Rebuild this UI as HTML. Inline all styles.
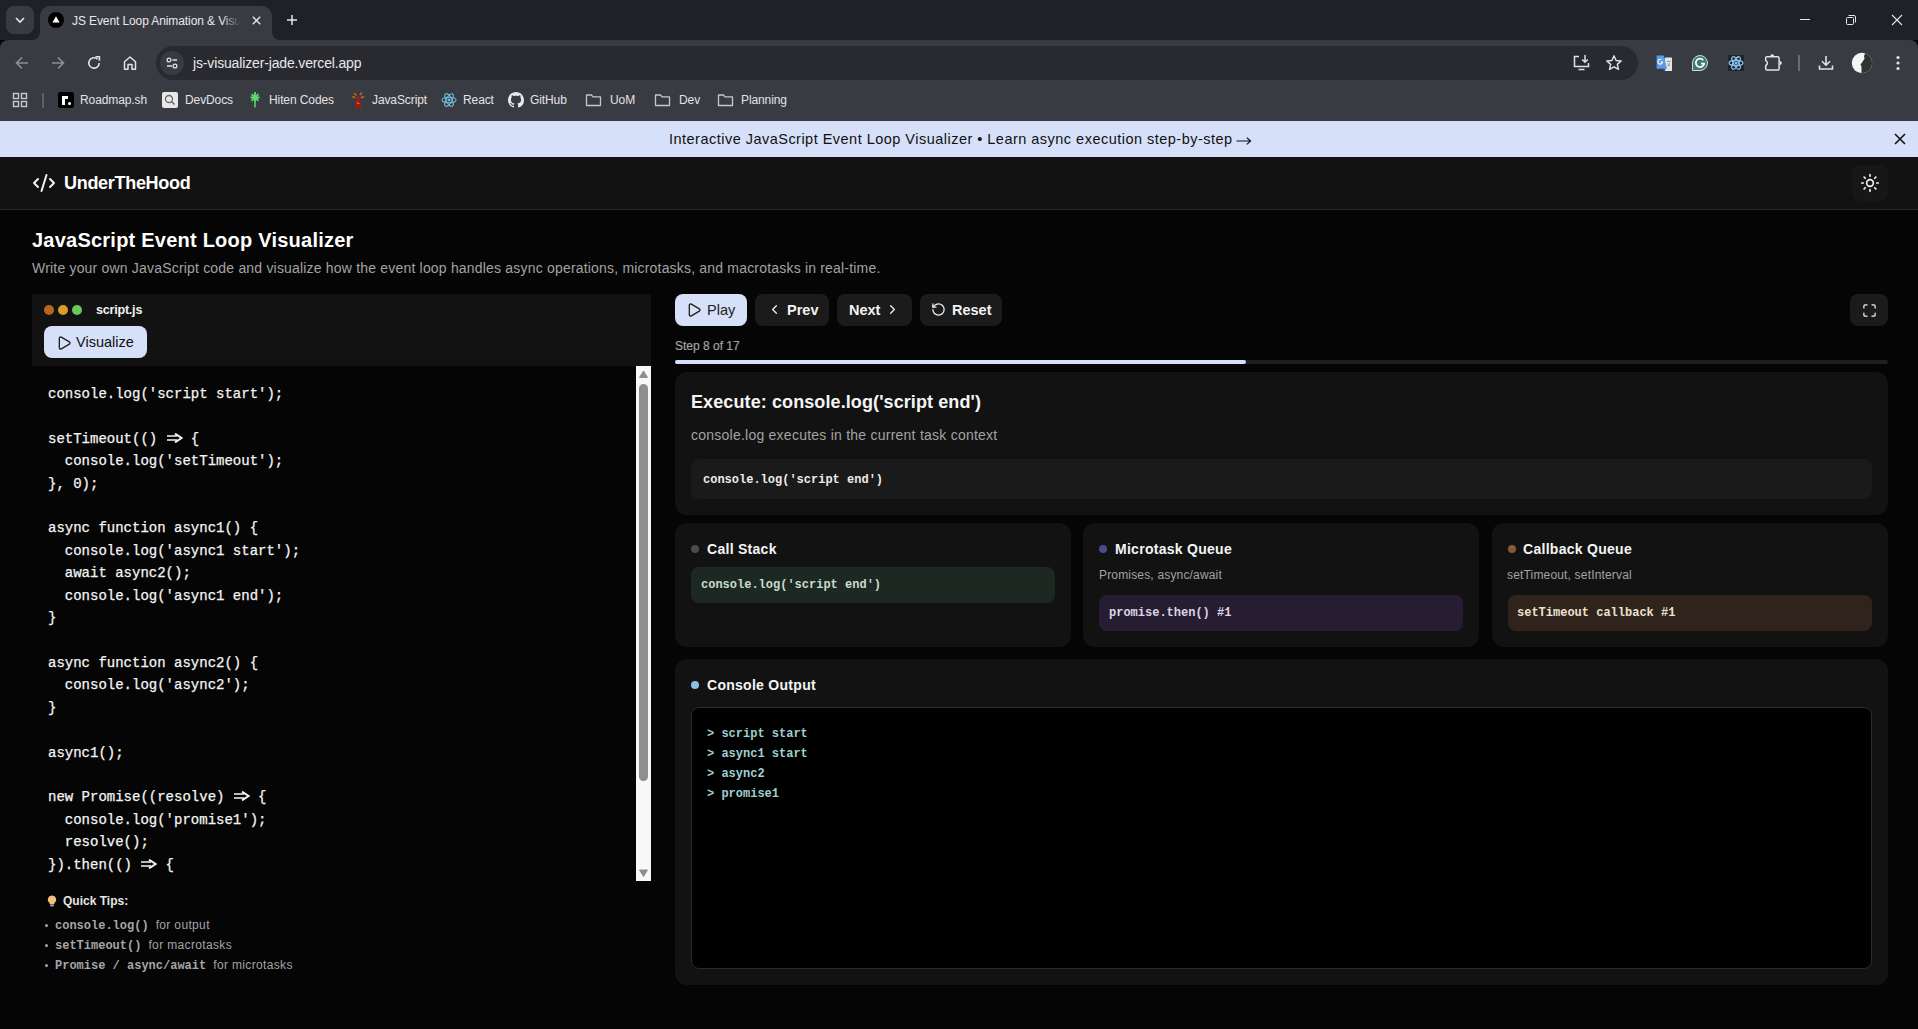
<!DOCTYPE html>
<html><head><meta charset="utf-8">
<style>
*{box-sizing:border-box;margin:0;padding:0}
html,body{width:1918px;height:1029px;overflow:hidden;background:#050505;font-family:"Liberation Sans",sans-serif;color:#fff}
.abs{position:absolute}
svg{display:block}
/* chrome */
#tabstrip{left:0;top:0;width:1918px;height:40px;background:#1f2129}
#toolbar{left:0;top:40px;width:1918px;height:81px;background:#393b43;border-radius:8px 8px 0 0}
#omni{left:156px;top:46px;width:1482px;height:34px;border-radius:17px;background:#282a30}
.bm{position:absolute;top:92px;height:16px;font-size:12px;letter-spacing:-0.1px;color:#e3e3e3;line-height:16px;white-space:nowrap}
/* app */
#banner{left:0;top:121px;width:1918px;height:36px;background:#d6e0f8;color:#111;font-size:14.5px;text-align:center;line-height:36px}
#hdr{left:0;top:157px;width:1918px;height:53px;background:#121212;border-bottom:1px solid #26272b}
.mono{font-family:"Liberation Mono",monospace}
.card{position:absolute;background:#121212;border-radius:12px}
.btn{position:absolute;top:294px;height:32px;border-radius:8px;background:#1b1b1b;font-size:15px;font-weight:bold;color:#f2f2f2;line-height:32px}
.code{left:48px;top:381px;font-size:14px;line-height:22.4px;color:#f5f5f5;white-space:pre;font-weight:normal;-webkit-text-stroke:0.25px #f5f5f5}
.arr{display:inline-block;width:16.8px;height:10px;vertical-align:0px}
.arr svg{display:block}
.tip{left:44px;font-size:12px;line-height:16px;color:#a3a3a3;white-space:pre}
.tip i{position:absolute;left:0.5px;top:6.5px;width:3px;height:3px;border-radius:50%;background:#a3a3a3}
.tip .mono{position:relative;left:11px;font-size:12px;font-weight:bold;color:#a6a6a6}
.tip b{position:relative;left:18px;font-weight:normal;letter-spacing:0.35px}
.btxt{top:301px;font-size:14.5px;font-weight:bold;line-height:18px;color:#f2f2f2}
.dot{position:absolute;width:8px;height:8px;border-radius:50%}
.ctitle{top:541px;font-size:14px;font-weight:bold;line-height:17px;color:#f5f5f5;letter-spacing:0.28px}
.csub{top:568px;font-size:12px;line-height:14px;color:#a3a3a3;letter-spacing:0.17px}
.item{font-size:12px;line-height:15px;font-weight:bold}
</style></head><body>

<!-- ============ TAB STRIP ============ -->
<div id="tabstrip" class="abs"></div>
<div class="abs" style="left:6px;top:6px;width:28px;height:28px;border-radius:8px;background:#393b43"></div>
<svg class="abs" style="left:14px;top:14px" width="12" height="12" viewBox="0 0 12 12"><path d="M2 4 L6 8 L10 4" stroke="#e6e6e6" stroke-width="1.6" fill="none"/></svg>
<!-- active tab -->
<div class="abs" style="left:40px;top:6px;width:232px;height:35px;background:#393b43;border-radius:10px 10px 0 0"></div>
<div class="abs" style="left:32px;top:32px;width:8px;height:8px;background:radial-gradient(circle at 0 0,#1f2129 7.5px,#393b43 8.5px)"></div>
<div class="abs" style="left:272px;top:32px;width:8px;height:8px;background:radial-gradient(circle at 100% 0,#1f2129 7.5px,#393b43 8.5px)"></div>
<div class="abs" style="left:48px;top:12px;width:16px;height:16px;border-radius:50%;background:#000"></div>
<svg class="abs" style="left:48px;top:12px" width="16" height="16" viewBox="0 0 16 16"><path d="M8 4.2 L11.6 10.6 L4.4 10.6Z" fill="#fff"/></svg>
<div class="abs" style="left:72px;top:12px;width:170px;height:18px;font-size:12px;letter-spacing:-0.1px;color:#e8e8e8;white-space:nowrap;overflow:hidden;line-height:18px">JS Event Loop Animation &amp; Visu</div>
<div class="abs" style="left:222px;top:10px;width:26px;height:20px;background:linear-gradient(90deg,rgba(57,59,67,0),#393b43 70%)"></div>
<svg class="abs" style="left:251.5px;top:15.5px" width="9" height="9" viewBox="0 0 9 9"><path d="M0.8 0.8L8.2 8.2M8.2 0.8L0.8 8.2" stroke="#e6e6e6" stroke-width="1.4"/></svg>
<svg class="abs" style="left:286px;top:14px" width="12" height="12" viewBox="0 0 12 12"><path d="M6 1V11M1 6H11" stroke="#e6e6e6" stroke-width="1.5"/></svg>
<!-- window controls -->
<svg class="abs" style="left:1799px;top:14px" width="12" height="12" viewBox="0 0 12 12"><path d="M1 5.5H11" stroke="#e6e6e6" stroke-width="1"/></svg>
<svg class="abs" style="left:1845px;top:14px" width="12" height="12" viewBox="0 0 12 12"><rect x="1.5" y="3.5" width="7" height="7" rx="1" stroke="#e6e6e6" stroke-width="1" fill="none"/><path d="M3.5 1.5H9A1.5 1.5 0 0 1 10.5 3V8.5" stroke="#e6e6e6" stroke-width="1" fill="none"/></svg>
<svg class="abs" style="left:1891px;top:14px" width="12" height="12" viewBox="0 0 12 12"><path d="M1 1L11 11M11 1L1 11" stroke="#e6e6e6" stroke-width="1.1"/></svg>

<!-- ============ TOOLBAR ============ -->
<div id="toolbar" class="abs"></div>
<svg class="abs" style="left:14px;top:55px" width="16" height="16" viewBox="0 0 16 16"><path d="M14 8H2.5M8 2.5L2.5 8L8 13.5" stroke="#8c8e94" stroke-width="1.6" fill="none"/></svg>
<svg class="abs" style="left:50px;top:55px" width="16" height="16" viewBox="0 0 16 16"><path d="M2 8H13.5M8 2.5L13.5 8L8 13.5" stroke="#8c8e94" stroke-width="1.6" fill="none"/></svg>
<svg class="abs" style="left:86px;top:55px" width="16" height="16" viewBox="0 0 16 16"><path d="M13.2 8A5.2 5.2 0 1 1 11.6 4.2" stroke="#e3e3e3" stroke-width="1.6" fill="none"/><path d="M9.5 1.8H13.4V5.7" stroke="#e3e3e3" stroke-width="1.6" fill="none"/></svg>
<svg class="abs" style="left:122px;top:55px" width="16" height="16" viewBox="0 0 16 16"><path d="M2.5 14.2V6.8L8 2L13.5 6.8V14.2H10V9.5H6V14.2Z" stroke="#e3e3e3" stroke-width="1.5" fill="none" stroke-linejoin="round"/></svg>
<div id="omni" class="abs"></div>
<div class="abs" style="left:160px;top:51px;width:24px;height:24px;border-radius:50%;background:#393b43"></div>
<svg class="abs" style="left:164px;top:55px" width="16" height="16" viewBox="0 0 16 16"><circle cx="5" cy="5" r="1.9" stroke="#e3e3e3" stroke-width="1.3" fill="none"/><path d="M8.5 5H13M3 11H8" stroke="#e3e3e3" stroke-width="1.3"/><circle cx="11" cy="11" r="1.9" stroke="#e3e3e3" stroke-width="1.3" fill="none"/></svg>
<div class="abs" style="left:193px;top:54px;font-size:14px;letter-spacing:-0.15px;color:#e8e8e8;line-height:18px">js-visualizer-jade.vercel.app</div>
<svg class="abs" style="left:1572px;top:54px" width="19" height="18" viewBox="0 0 19 18"><path d="M7 2.5H2.5V12.5H16.5V9" stroke="#e3e3e3" stroke-width="1.5" fill="none"/><path d="M6.5 15.5H12.5" stroke="#e3e3e3" stroke-width="1.5"/><path d="M13 1V8M10.2 5.5L13 8.3L15.8 5.5" stroke="#e3e3e3" stroke-width="1.5" fill="none"/></svg>
<svg class="abs" style="left:1605px;top:54px" width="18" height="18" viewBox="0 0 18 18"><path d="M9 1.8L11.1 6.5L16.2 7L12.3 10.4L13.5 15.4L9 12.8L4.5 15.4L5.7 10.4L1.8 7L6.9 6.5Z" stroke="#e3e3e3" stroke-width="1.4" fill="none" stroke-linejoin="round"/></svg>
<!-- extensions -->
<svg class="abs" style="left:1656px;top:55px" width="17" height="17" viewBox="0 0 17 17"><rect x="8.8" y="2.6" width="7.2" height="13.5" rx="0.6" fill="#e6e6e6"/><path d="M0.6 0.6H7.8L11 13.8H0.6Z" fill="#5a9be8"/><path d="M7 13.8L8.8 16.1L9.8 13.8Z" fill="#3a5fc0"/><path d="M6.6 6.4A2.4 2.4 0 1 1 5.4 4.6M4.6 7H6.7" stroke="#fff" stroke-width="1.1" fill="none"/><path d="M11 6.5H14.5M12.7 5.5V6.5M11.8 8.5L14 11M14 8L11.5 11.5" stroke="#6a8a88" stroke-width="0.7"/></svg>
<svg class="abs" style="left:1692px;top:55px" width="16" height="16" viewBox="0 0 16 16"><path d="M8 0.5A7.5 7.5 0 1 1 8 15.5H0.5V8A7.5 7.5 0 0 1 8 0.5Z" fill="#3a7b72" stroke="#e6e6e6" stroke-width="0.9"/><path d="M11.3 5.2A4.2 4.2 0 1 0 12.2 8.6H9" stroke="#fff" stroke-width="1.7" fill="none"/></svg>
<div class="abs" style="left:1728px;top:55px;width:16px;height:16px;background:#20232a"></div>
<svg class="abs" style="left:1728px;top:55px" width="16" height="16" viewBox="0 0 16 16"><g stroke="#86c5f2" stroke-width="1.2" fill="none"><ellipse cx="8" cy="8" rx="7" ry="2.6"/><ellipse cx="8" cy="8" rx="7" ry="2.6" transform="rotate(60 8 8)"/><ellipse cx="8" cy="8" rx="7" ry="2.6" transform="rotate(120 8 8)"/></g><circle cx="8" cy="8" r="1.5" fill="#86c5f2"/></svg>
<svg class="abs" style="left:1760px;top:50px" width="26" height="26" viewBox="0 0 26 26"><path d="M7 6.8H17.8A1.3 1.3 0 0 1 19.1 8.1V18.7A1.3 1.3 0 0 1 17.8 20H7A1.3 1.3 0 0 1 5.7 18.7V15.5A2.6 2.6 0 0 0 5.7 10.6V8.1A1.3 1.3 0 0 1 7 6.8Z" stroke="#e3e3e3" stroke-width="1.5" fill="none"/><path d="M10.2 6.2A2 2 0 0 1 14.2 6.2Z" fill="#e3e3e3"/><path d="M19.8 11A2 2 0 0 1 19.8 15Z" fill="#e3e3e3"/></svg>
<div class="abs" style="left:1798px;top:55px;width:1.5px;height:16px;background:#6b6d73"></div>
<svg class="abs" style="left:1817px;top:54px" width="18" height="18" viewBox="0 0 18 18"><path d="M9 2V11M5 7.2L9 11.2L13 7.2" stroke="#e3e3e3" stroke-width="1.6" fill="none"/><path d="M2.5 11.5V15H15.5V11.5" stroke="#e3e3e3" stroke-width="1.6" fill="none"/></svg>
<svg class="abs" style="left:1851px;top:52px" width="22" height="22" viewBox="0 0 22 22"><defs><clipPath id="avc"><circle cx="11" cy="11" r="10.2"/></clipPath></defs><g clip-path="url(#avc)"><rect width="22" height="22" fill="#f4f4f4"/><path d="M14.6 0L13 4.2L13.6 6.6L11.4 10L9.4 12.6L10.4 14.2L10.6 22H22V0Z" fill="#303233"/></g></svg>
<svg class="abs" style="left:1894px;top:54px" width="8" height="18" viewBox="0 0 8 18"><circle cx="4" cy="3.5" r="1.6" fill="#e3e3e3"/><circle cx="4" cy="9" r="1.6" fill="#e3e3e3"/><circle cx="4" cy="14.5" r="1.6" fill="#e3e3e3"/></svg>

<!-- bookmarks bar -->
<svg class="abs" style="left:12px;top:92px" width="16" height="16" viewBox="0 0 16 16"><g stroke="#c8c8c8" stroke-width="1.4" fill="none"><rect x="1.5" y="1.5" width="5" height="5"/><rect x="9.5" y="1.5" width="5" height="5"/><rect x="1.5" y="9.5" width="5" height="5"/><rect x="9.5" y="9.5" width="5" height="5"/></g></svg>
<div class="abs" style="left:42px;top:93px;width:1.5px;height:15px;background:#5f6167"></div>
<div class="abs" style="left:58px;top:92px;width:16px;height:16px;border-radius:2px;background:#000"></div>
<div class="abs" style="left:62px;top:96px;width:3px;height:9px;background:#fff"></div>
<div class="abs" style="left:62px;top:96px;width:6px;height:3px;background:#fff"></div>
<div class="abs" style="left:68px;top:102px;width:3px;height:3px;background:#fff;border-radius:50%"></div>
<div class="bm" style="left:80px">Roadmap.sh</div>
<div class="abs" style="left:162px;top:92px;width:16px;height:16px;border-radius:2px;background:#e8e8e8"></div>
<svg class="abs" style="left:162px;top:92px" width="16" height="16" viewBox="0 0 16 16"><circle cx="7" cy="7" r="3.5" stroke="#666" stroke-width="1.3" fill="none"/><path d="M9.5 9.5L12.5 12.5" stroke="#666" stroke-width="1.5"/></svg>
<div class="bm" style="left:185px">DevDocs</div>
<svg class="abs" style="left:247px;top:91px" width="16" height="17" viewBox="0 0 16 17"><g stroke="#62d86a" stroke-width="1.8"><path d="M8 1V11M3.5 6.5H12.5M4.6 3.1L11.4 9.9M11.4 3.1L4.6 9.9"/><path d="M8 11V16.5" stroke-width="1.5"/></g></svg>
<div class="bm" style="left:269px">Hiten Codes</div>
<svg class="abs" style="left:345px;top:88px" width="25" height="24" viewBox="0 0 25 24"><g stroke-linecap="round"><path d="M13 10L11 19.5M13 12.5L15.8 19.5" stroke="#b5120c" stroke-width="2.2"/><circle cx="13.2" cy="10" r="1.5" fill="#c0140c"/><path d="M9.5 5.5L11 7M16.5 5L15.3 6.6M7.8 8.8L9.8 9.6M18.5 8.8L16.5 9.6" stroke="#c8621a" stroke-width="1.6"/><path d="M12 15L14 15.5" stroke="#c8901a" stroke-width="1"/></g></svg>
<div class="bm" style="left:372px">JavaScript</div>
<svg class="abs" style="left:441px;top:92px" width="16" height="16" viewBox="0 0 16 16"><g stroke="#70b8d8" stroke-width="1.1" fill="none"><ellipse cx="8" cy="8" rx="7" ry="2.8"/><ellipse cx="8" cy="8" rx="7" ry="2.8" transform="rotate(60 8 8)"/><ellipse cx="8" cy="8" rx="7" ry="2.8" transform="rotate(120 8 8)"/></g><circle cx="8" cy="8" r="1.4" fill="#70b8d8"/></svg>
<div class="bm" style="left:463px">React</div>
<svg class="abs" style="left:508px;top:92px" width="16" height="16" viewBox="0 0 16 16"><path fill="#e8e8e8" d="M8 0C3.58 0 0 3.58 0 8c0 3.54 2.29 6.53 5.47 7.59.4.07.55-.17.55-.38 0-.19-.01-.82-.01-1.49-2.01.37-2.53-.49-2.69-.94-.09-.23-.48-.94-.82-1.13-.28-.15-.68-.52-.01-.53.63-.01 1.08.58 1.23.82.72 1.21 1.87.87 2.33.66.07-.52.28-.87.51-1.07-1.78-.2-3.64-.89-3.64-3.95 0-.87.31-1.59.82-2.15-.08-.2-.36-1.02.08-2.12 0 0 .67-.21 2.2.82.64-.18 1.32-.27 2-.27.68 0 1.36.09 2 .27 1.53-1.04 2.2-.82 2.2-.82.44 1.1.16 1.92.08 2.12.51.56.82 1.27.82 2.15 0 3.07-1.87 3.75-3.65 3.95.29.25.54.73.54 1.48 0 1.07-.01 1.93-.01 2.2 0 .21.15.46.55.38A8.013 8.013 0 0016 8c0-4.42-3.58-8-8-8z"/></svg>
<div class="bm" style="left:530px">GitHub</div>
<svg class="abs" style="left:585px;top:92px" width="17" height="16" viewBox="0 0 17 16"><path d="M1.5 3H6.5L8 4.8H15.5V13.5H1.5Z" stroke="#c8c8c8" stroke-width="1.3" fill="none" stroke-linejoin="round"/></svg>
<div class="bm" style="left:610px">UoM</div>
<svg class="abs" style="left:654px;top:92px" width="17" height="16" viewBox="0 0 17 16"><path d="M1.5 3H6.5L8 4.8H15.5V13.5H1.5Z" stroke="#c8c8c8" stroke-width="1.3" fill="none" stroke-linejoin="round"/></svg>
<div class="bm" style="left:679px">Dev</div>
<svg class="abs" style="left:717px;top:92px" width="17" height="16" viewBox="0 0 17 16"><path d="M1.5 3H6.5L8 4.8H15.5V13.5H1.5Z" stroke="#c8c8c8" stroke-width="1.3" fill="none" stroke-linejoin="round"/></svg>
<div class="bm" style="left:741px">Planning</div>

<!-- ============ APP ============ -->
<div id="banner" class="abs"></div>
<div class="abs" id="bantxt" style="left:669px;top:130px;font-size:14.5px;line-height:18px;color:#111;letter-spacing:0.48px;white-space:nowrap">Interactive JavaScript Event Loop Visualizer • Learn async execution step-by-step</div>
<svg class="abs" style="left:1236px;top:135.5px" width="16" height="10" viewBox="0 0 16 10"><path d="M0.5 5H14.6M10.8 1.6L14.6 5L10.8 8.4" stroke="#111" stroke-width="1.15" fill="none"/></svg>
<svg class="abs" style="left:1893px;top:132px" width="14" height="14" viewBox="0 0 14 14"><path d="M2 2L12 12M12 2L2 12" stroke="#111" stroke-width="1.6"/></svg>

<div id="hdr" class="abs"></div>
<svg class="abs" style="left:31px;top:171px" width="26" height="24" viewBox="0 0 24 24" stroke="#f2f2f2" stroke-width="2" fill="none" stroke-linecap="round" stroke-linejoin="round"><path d="m18 16 4-4-4-4"/><path d="m6 8-4 4 4 4"/><path d="m14.5 4-5 16"/></svg>
<div class="abs" style="left:64px;top:172px;font-size:18px;font-weight:bold;line-height:22px;letter-spacing:-0.3px">UnderTheHood</div>
<div class="abs" style="left:1852px;top:165px;width:36px;height:36px;border-radius:8px;background:#171717"></div>
<svg class="abs" style="left:1860px;top:173px" width="20" height="20" viewBox="0 0 24 24" fill="none" stroke="#f2f2f2" stroke-width="2" stroke-linecap="round"><circle cx="12" cy="12" r="4"/><path d="M12 2v2M12 20v2M4.93 4.93l1.41 1.41M17.66 17.66l1.41 1.41M2 12h2M20 12h2M6.34 17.66l-1.41 1.41M19.07 4.93l-1.41 1.41"/></svg>

<div class="abs" style="left:32px;top:228px;font-size:20px;font-weight:bold;line-height:24px;letter-spacing:0.23px">JavaScript Event Loop Visualizer</div>
<div class="abs" style="left:32px;top:259px;font-size:14px;color:#a3a3a3;line-height:18px;letter-spacing:0.19px">Write your own JavaScript code and visualize how the event loop handles async operations, microtasks, and macrotasks in real-time.</div>


<!-- editor -->
<div class="abs" style="left:32px;top:294px;width:619px;height:72px;background:#121212"></div>
<div class="abs" style="left:44px;top:305px;width:10px;height:10px;border-radius:50%;background:#b8661e"></div>
<div class="abs" style="left:58px;top:305px;width:10px;height:10px;border-radius:50%;background:#d89c27"></div>
<div class="abs" style="left:72px;top:305px;width:10px;height:10px;border-radius:50%;background:#68c95b"></div>
<div class="abs" style="left:96px;top:302px;font-size:12.5px;font-weight:bold;line-height:16px;color:#f2f2f2;letter-spacing:-0.2px">script.js</div>
<div class="abs" style="left:44px;top:326px;width:103px;height:32px;border-radius:8px;background:#d6e0f8"></div>
<svg class="abs" style="left:56px;top:334.5px" width="16" height="16" viewBox="0 0 24 24" stroke="#222" stroke-width="2" fill="none" stroke-linecap="round" stroke-linejoin="round"><path d="M5 5a2 2 0 0 1 3.008-1.728l11.997 6.998a2 2 0 0 1 .003 3.458l-12 7A2 2 0 0 1 5 19z"/></svg>
<div class="abs" style="left:76px;top:333px;font-size:14.5px;line-height:18px;color:#111">Visualize</div>

<div class="abs" style="left:32px;top:366px;width:604px;height:514px;overflow:hidden">
<pre class="abs code mono" style="left:16px;top:17px">console.log('script start');

setTimeout(() <span class="arr"><svg width="17" height="10" viewBox="0 0 17 10"><path d="M1 3H11M1 7H11" stroke="#f5f5f5" stroke-width="1.7"/><path d="M9 0.6L15.6 5L9 9.4" stroke="#f5f5f5" stroke-width="1.9" fill="none"/></svg></span> {
  console.log('setTimeout');
}, 0);

async function async1() {
  console.log('async1 start');
  await async2();
  console.log('async1 end');
}

async function async2() {
  console.log('async2');
}

async1();

new Promise((resolve) <span class="arr"><svg width="17" height="10" viewBox="0 0 17 10"><path d="M1 3H11M1 7H11" stroke="#f5f5f5" stroke-width="1.7"/><path d="M9 0.6L15.6 5L9 9.4" stroke="#f5f5f5" stroke-width="1.9" fill="none"/></svg></span> {
  console.log('promise1');
  resolve();
}).then(() <span class="arr"><svg width="17" height="10" viewBox="0 0 17 10"><path d="M1 3H11M1 7H11" stroke="#f5f5f5" stroke-width="1.7"/><path d="M9 0.6L15.6 5L9 9.4" stroke="#f5f5f5" stroke-width="1.9" fill="none"/></svg></span> {
  console.log('promise2');
});</pre>
</div>
<!-- scrollbar -->
<div class="abs" style="left:636px;top:366px;width:15px;height:515px;background:#f8f8f8"></div>
<svg class="abs" style="left:636px;top:366px" width="15" height="15" viewBox="0 0 15 15"><path d="M7.5 5L11.5 11.5H3.5Z" fill="#8e8e8e" stroke="#8e8e8e" stroke-linejoin="round"/></svg>
<div class="abs" style="left:639px;top:384px;width:9px;height:397px;border-radius:4.5px;background:#8e8e8e"></div>
<svg class="abs" style="left:636px;top:866px" width="15" height="15" viewBox="0 0 15 15"><path d="M7.5 10.5L11.5 4H3.5Z" fill="#8e8e8e" stroke="#8e8e8e" stroke-linejoin="round"/></svg>

<!-- quick tips -->
<div class="abs" style="left:47px;top:895px;width:10px;height:12px">
<svg width="10" height="12" viewBox="0 0 10 12"><path d="M5 0.5A4 4 0 0 0 2.6 7.8V9H7.4V7.8A4 4 0 0 0 5 0.5Z" fill="#f2c27a"/><rect x="3" y="9.3" width="4" height="2.2" rx="0.8" fill="#9a9aa2"/></svg></div>
<div class="abs" style="left:63px;top:894px;font-size:12px;font-weight:bold;line-height:14px;color:#e6e6e6">Quick Tips:</div>
<div class="abs tip" style="top:917px"><i></i><span class="mono">console.log()</span><b>for output</b></div>
<div class="abs tip" style="top:937px"><i></i><span class="mono">setTimeout()</span><b>for macrotasks</b></div>
<div class="abs tip" style="top:957px"><i></i><span class="mono">Promise / async/await</span><b>for microtasks</b></div>

<!-- controls -->
<div class="btn" style="left:675px;width:72px;background:#d6e0f8;color:#222;font-weight:normal"></div>
<svg class="abs" style="left:686px;top:302px" width="16" height="16" viewBox="0 0 24 24" stroke="#222" stroke-width="2" fill="none" stroke-linecap="round" stroke-linejoin="round"><path d="M5 5a2 2 0 0 1 3.008-1.728l11.997 6.998a2 2 0 0 1 .003 3.458l-12 7A2 2 0 0 1 5 19z"/></svg>
<div class="abs" style="left:707px;top:301px;font-size:14.5px;line-height:18px;color:#222">Play</div>
<div class="btn" style="left:755px;width:74px"></div>
<svg class="abs" style="left:767px;top:302px" width="15" height="15" viewBox="0 0 24 24" stroke="#f2f2f2" stroke-width="2" fill="none" stroke-linecap="round" stroke-linejoin="round"><path d="m15 18-6-6 6-6"/></svg>
<div class="abs btxt" style="left:787px">Prev</div>
<div class="btn" style="left:837px;width:75px"></div>
<div class="abs btxt" style="left:849px">Next</div>
<svg class="abs" style="left:885px;top:302px" width="15" height="15" viewBox="0 0 24 24" stroke="#f2f2f2" stroke-width="2" fill="none" stroke-linecap="round" stroke-linejoin="round"><path d="m9 18 6-6-6-6"/></svg>
<div class="btn" style="left:920px;width:82px"></div>
<svg class="abs" style="left:931px;top:302px" width="15" height="15" viewBox="0 0 24 24" stroke="#f2f2f2" stroke-width="2" fill="none" stroke-linecap="round" stroke-linejoin="round"><path d="M3 12a9 9 0 1 0 9-9 9.75 9.75 0 0 0-6.74 2.74L3 8"/><path d="M3 3v5h5"/></svg>
<div class="abs btxt" style="left:952px">Reset</div>
<div class="btn" style="left:1850px;width:38px"></div>
<svg class="abs" style="left:1861.5px;top:302.5px" width="15" height="15" viewBox="0 0 24 24" stroke="#f2f2f2" stroke-width="2" fill="none" stroke-linecap="round" stroke-linejoin="round"><path d="M8 3H5a2 2 0 0 0-2 2v3"/><path d="M21 8V5a2 2 0 0 0-2-2h-3"/><path d="M3 16v3a2 2 0 0 0 2 2h3"/><path d="M16 21h3a2 2 0 0 0 2-2v-3"/></svg>

<div class="abs" style="left:675px;top:339px;font-size:12px;line-height:14px;color:#a3a3a3;-webkit-text-stroke:0.2px #a3a3a3">Step 8 of 17</div>
<div class="abs" style="left:675px;top:360px;width:1213px;height:4px;border-radius:2px;background:#1f1f1f"></div>
<div class="abs" style="left:675px;top:360px;width:571px;height:4px;border-radius:2px;background:#d6e0f8"></div>

<!-- execute card -->
<div class="card" style="left:675px;top:372px;width:1213px;height:143px"></div>
<div class="abs" style="left:691px;top:391px;font-size:18px;font-weight:bold;line-height:22px;color:#f5f5f5;letter-spacing:0.1px">Execute: console.log('script end')</div>
<div class="abs" style="left:691px;top:427px;font-size:14px;line-height:17px;color:#a3a3a3;letter-spacing:0.24px">console.log executes in the current task context</div>
<div class="abs" style="left:691px;top:459px;width:1181px;height:40px;border-radius:8px;background:#1a1a1a"></div>
<div class="abs mono" style="left:703px;top:473px;font-size:12px;line-height:15px;color:#ececec;font-weight:bold">console.log('script end')</div>

<!-- three cards -->
<div class="card" style="left:675px;top:523px;width:396px;height:124px"></div>
<div class="dot" style="left:691px;top:545px;background:#4b4b4f"></div>
<div class="abs ctitle" style="left:707px">Call Stack</div>
<div class="abs" style="left:691px;top:567px;width:364px;height:36px;border-radius:8px;background:#1e2823"></div>
<div class="abs mono item" style="left:701px;top:578px;color:#c8dccf">console.log('script end')</div>

<div class="card" style="left:1083px;top:523px;width:396px;height:124px"></div>
<div class="dot" style="left:1099px;top:545px;background:#4a4b8b"></div>
<div class="abs ctitle" style="left:1115px">Microtask Queue</div>
<div class="abs csub" style="left:1099px">Promises, async/await</div>
<div class="abs" style="left:1099px;top:595px;width:364px;height:36px;border-radius:8px;background:#261d33"></div>
<div class="abs mono item" style="left:1109px;top:606px;color:#dcd6e4">promise.then() #1</div>

<div class="card" style="left:1492px;top:523px;width:396px;height:124px"></div>
<div class="dot" style="left:1508px;top:545px;background:#8a583a"></div>
<div class="abs ctitle" style="left:1523px">Callback Queue</div>
<div class="abs csub" style="left:1507px">setTimeout, setInterval</div>
<div class="abs" style="left:1508px;top:595px;width:364px;height:36px;border-radius:8px;background:#30231b"></div>
<div class="abs mono item" style="left:1517px;top:606px;color:#ece2cf">setTimeout callback #1</div>

<!-- console -->
<div class="card" style="left:675px;top:659px;width:1213px;height:326px"></div>
<div class="dot" style="left:691px;top:681px;background:#87c2de"></div>
<div class="abs ctitle" style="left:707px;top:677px">Console Output</div>
<div class="abs" style="left:691px;top:707px;width:1181px;height:262px;border-radius:8px;background:#000;border:1px solid #2a2a30"></div>
<pre class="abs mono" style="left:707px;top:724px;font-size:12px;line-height:20px;color:#9fcfcf;font-weight:bold">&gt; script start
&gt; async1 start
&gt; async2
&gt; promise1</pre>

</body></html>
